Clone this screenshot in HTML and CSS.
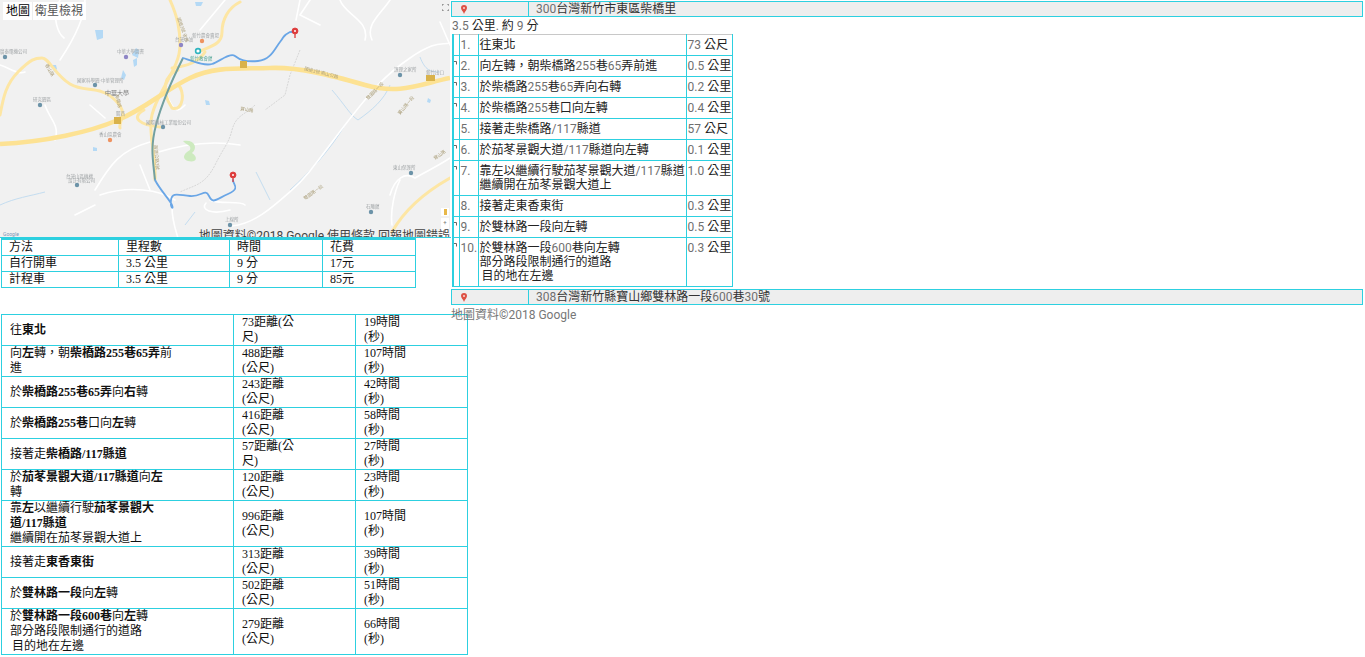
FILE: index.html
```html
<!DOCTYPE html>
<html lang="zh-Hant">
<head>
<meta charset="utf-8">
<title>路線</title>
<link rel="stylesheet" href="styles.css">
</head>
<body>
<div class="page">
  <div class="left">
    <div class="map">
      <svg class="map-art" width="450" height="238" viewBox="0 0 450 238">
        <rect width="450" height="238" fill="#f1f1f1"/>
        <path class="water" d="M95 30l8 0 0 8-6 2zM132 55l4-7 3 2-1 8zM123 70l3 5-2 5-3-2zM133 60l4-2 0 7-3 2zM52 65l4 0 1 4-3 3zM205 100l4 1 1 4-4 0zM93 147l4 1 0 3-4 0zM428 98l3 2-1 3-3-1zM195 2l8 0-2 4-5 0z"/>
        <path class="stream" d="M0 205C15 198 30 196 45 192M256 172L270 200M332 90C345 105 350 115 358 120M358 120C372 110 384 100 390 85M290 190C310 172 330 150 345 125M185 225L195 212M420 57C425 70 430 72 440 72"/>
        <g class="white">
          <path d="M232 226C255 224 275 205 292 190S318 160 345 125 385 75 410 58 440 45 450 43"/>
          <path d="M210 200C220 205 240 200 245 205M172 207C172 220 175 228 178 238M206 203C200 210 212 215 230 210"/>
          <path d="M0 65C10 68 18 75 25 72M85 0C85 20 70 45 60 60M60 0C50 20 60 35 64 38M175 200C160 190 130 185 100 195M150 142C120 150 110 165 95 190M225 0L200 30M300 0L296 20M310 0L300 15 320 25M340 0C345 15 370 20 365 40M390 0C380 15 365 25 372 40M155 153C180 145 210 140 240 145M390 195C395 178 405 172 415 178 425 172 440 165 450 158M392 225C390 210 395 190 400 180"/>
          <path d="M90 105L105 118M45 105C50 120 60 125 55 140M165 90C175 118 180 110 185 105M440 22L450 45M75 215L95 205M140 165L150 190"/>
        </g>
        <path class="trail" d="M255 105C245 115 236 115 232 130S225 145 215 165 195 185 180 192M300 50L290 75 285 95 265 110"/>
        <path class="green" d="M183 141C195 139 198 148 192 153 199 158 196 163 188 161 180 158 186 152 190 150 192 145 186 145 183 141Z"/>
        <g class="yroad">
          <path d="M170 0C178 18 180 30 180 45S172 72 160 95 150 125 153 150 155 175 155 180"/>
          <path d="M240 2C228 8 222 20 222 32S212 46 198 52"/>
          <path d="M0 115C3 100 5 85 18 72S35 58 42 58 55 75 70 84 100 85 115 100 118 120 120 128"/>
          <path d="M392 232C402 214 420 195 450 178"/>
          <path d="M144 110C130 118 140 125 160 127M178 70C165 75 160 90 172 108 184 112 185 90 178 85"/>
          <path d="M172 68C190 66 200 60 205 52"/>
        </g>
        <path class="ymain" d="M0 144C45 142 90 132 118 120S165 90 190 78 240 69 270 68 330 75 365 85 420 84 450 78"/>
        <path class="rt-teal" d="M183 58C172 80 162 102 156 125S153 160 155 180"/>
        <path class="rt" d="M155 180C160 190 170 200 172 205S170 208 171 200 178 195 190 196 205 188 209 196 215 200 228 194 233 185 233 180"/>
        <path class="rt" d="M183 58C195 62 205 66 212 64S230 52 235 56 245 62 258 61 275 48 280 42 282 36 290 32L295 32"/>
        <g class="poi">
          <circle cx="5" cy="57" r="2.2" fill="#6c93a8"/><circle cx="181" cy="45" r="2.2" fill="#8e86c5"/>
          <circle cx="126" cy="57" r="2.2" fill="#8e86c5"/><circle cx="95" cy="85" r="2.2" fill="#6c93a8"/>
          <circle cx="40" cy="105" r="2.2" fill="#6c93a8"/><circle cx="163" cy="127" r="2.2" fill="#6c93a8"/>
          <circle cx="77" cy="185" r="2.2" fill="#6c93a8"/><circle cx="230" cy="225" r="2.2" fill="#6c93a8"/>
          <circle cx="411" cy="173" r="2.2" fill="#6c93a8"/><circle cx="371" cy="212" r="2.2" fill="#6c93a8"/>
          <circle cx="400" cy="75" r="2.2" fill="#6c93a8"/><circle cx="202" cy="41" r="2.2" fill="#ee9361"/>
          <circle cx="110" cy="140" r="2.2" fill="#ee9361"/>
          <rect x="114" y="117" width="7" height="7" fill="#d9b24a"/><rect x="240" y="61" width="7" height="7" fill="#d9b24a"/><rect x="426" y="75" width="9" height="6" fill="#d9b24a"/>
        </g>
        <g class="lbl">
          <text x="0" y="53">廣泰電機公司</text><text x="117" y="53">中華大學圖書</text><text x="175" y="41">台灣中油</text><text x="192" y="37">新竹農會賣場</text>
          <text x="77" y="82">國家科學園-中華管理所</text><text x="33" y="101">研究園區</text><text x="146" y="124">國際機械工業股份公司</text><text x="99" y="136">香山區農會</text>
          <text x="66" y="178">台灣山區機構</text><text x="68" y="182">設計有限公司</text><text x="393" y="169">東山保護所</text><text x="366" y="208">石雕館</text><text x="394" y="71">護理之家所</text><text x="225" y="221">上線所</text>
          <text x="426" y="74">新竹出口</text><text x="116" y="115">關西</text>
          <text class="strong" x="105" y="95">中華大學</text><text class="green-t" x="190" y="60">新竹教會館</text>
          <text class="rot" transform="translate(177 18) rotate(70)">國道3號 省道</text>
          <text class="rot" transform="translate(304 70) rotate(14)">國道3號 南山公路</text>
          <text class="rot" transform="translate(154 145) rotate(85)">高速公路3號</text>
          <text class="rot" transform="translate(115 95) rotate(75)">柴橋路</text>
          <text class="rot" transform="translate(45 65) rotate(60)">香山路</text>
          <text class="rot" transform="translate(305 200) rotate(-35)">雙園路一段</text>
          <text class="rot" transform="translate(368 100) rotate(-45)">雙園路一段</text>
          <text class="rot" transform="translate(435 160) rotate(-35)">寶山路</text>
          <text class="rot" transform="translate(400 115) rotate(-50)">寶山路一段</text>
          <text class="rot" transform="translate(240 110) rotate(10)">寶山路</text>
        </g>
        <g><path class="rpin" d="M295 28a3 3 0 1 0 0 6l0 4 0-4a3 3 0 1 0 0-6z"/><circle cx="295" cy="31" r="1" fill="#fff"/>
        <path class="rpin" d="M233 172a3 3 0 1 0 0 6l0 4 0-4a3 3 0 1 0 0-6z"/><circle cx="233" cy="175" r="1" fill="#fff"/>
        <circle cx="198" cy="51" r="2.4" fill="#fff" stroke="#2fb4bf" stroke-width="1.6"/></g>
      </svg>
      <div class="maptype"><span class="mt-on">地圖</span><span class="mt-off">衛星檢視</span></div>
      <svg class="fs" width="7" height="7" viewBox="0 0 7 7"><path d="M0 2V0H2M5 0H7V2M7 5V7H5M2 7H0V5" fill="none" stroke="#777"/></svg>
      <div class="glogo">Google</div>
      <div class="pegman"></div>
      <div class="zoombox"><span>+</span><span>-</span></div>
      <div class="attr">地圖資料©2018 Google 使用條款 回報地圖錯誤</div>
    </div>

    <table class="t1">
      <colgroup><col class="t1a"><col class="t1b"><col class="t1c"><col class="t1d"></colgroup>
      <tr><td>方法</td><td>里程數</td><td>時間</td><td>花費</td></tr>
      <tr><td>自行開車</td><td>3.5 公里</td><td>9 分</td><td>17元</td></tr>
      <tr><td>計程車</td><td>3.5 公里</td><td>9 分</td><td>85元</td></tr>
    </table>

    <table class="t2">
      <colgroup><col class="t2a"><col class="t2b"><col class="t2c"></colgroup>
      <tr><td class="c1">往<b>東北</b></td><td class="c2">73距離(公尺)</td><td class="c3">19時間(秒)</td></tr>
      <tr><td class="c1">向<b>左</b>轉，朝<b>柴橋路255巷65弄</b>前進</td><td class="c2">488距離(公尺)</td><td class="c3">107時間(秒)</td></tr>
      <tr><td class="c1">於<b>柴橋路255巷65弄</b>向<b>右</b>轉</td><td class="c2">243距離(公尺)</td><td class="c3">42時間(秒)</td></tr>
      <tr><td class="c1">於<b>柴橋路255巷</b>口向<b>左</b>轉</td><td class="c2">416距離(公尺)</td><td class="c3">58時間(秒)</td></tr>
      <tr><td class="c1">接著走<b>柴橋路/117縣道</b></td><td class="c2">57距離(公尺)</td><td class="c3">27時間(秒)</td></tr>
      <tr><td class="c1">於<b>茄苳景觀大道/117縣道</b>向<b>左</b>轉</td><td class="c2">120距離(公尺)</td><td class="c3">23時間(秒)</td></tr>
      <tr><td class="c1">靠<b>左</b>以繼續行駛<b>茄苳景觀大道/117縣道</b><div>繼續開在茄苳景觀大道上</div></td><td class="c2">996距離(公尺)</td><td class="c3">107時間(秒)</td></tr>
      <tr><td class="c1">接著走<b>東香東街</b></td><td class="c2">313距離(公尺)</td><td class="c3">39時間(秒)</td></tr>
      <tr><td class="c1">於<b>雙林路一段</b>向<b>左</b>轉</td><td class="c2">502距離(公尺)</td><td class="c3">51時間(秒)</td></tr>
      <tr><td class="c1">於<b>雙林路一段600巷</b>向<b>左</b>轉<div>部分路段限制通行的道路</div><div class="dest">目的地在左邊</div></td><td class="c2">279距離(公尺)</td><td class="c3">66時間(秒)</td></tr>
    </table>
  </div>

  <div class="right">
    <table class="way">
      <tr><td class="way-pin"><svg class="pin" width="6" height="9" viewBox="0 0 6 9"><path d="M3 0a3 3 0 0 0-3 3c0 2 2 3 3 6 1-3 3-4 3-6a3 3 0 0 0-3-3z" fill="#dd5144"/><circle cx="3" cy="3" r="1" fill="#f7d9d6"/></svg></td><td class="way-text"><span class="l">300</span>台灣新竹市東區柴橋里</td></tr>
    </table>
    <div class="summary"><span class="l">3.5</span> 公里<span class="l">.</span> 約 <span class="l">9</span> 分</div>
    <table class="steps">
      <colgroup><col class="s0"><col class="s1"><col class="s2"><col class="s3"></colgroup>
      <tr><td class="ic"></td><td class="n">1.</td><td>往東北</td><td><span class="l">73</span> 公尺</td></tr>
      <tr><td class="ic"><svg class="turn" width="4" height="4" viewBox="0 0 4 4"><path d="M0 .5H2.5V3.5" fill="none" stroke="#666"/></svg></td><td class="n">2.</td><td>向左轉，朝柴橋路<span class="l">255</span>巷<span class="l">65</span>弄前進</td><td><span class="l">0.5</span> 公里</td></tr>
      <tr><td class="ic"><svg class="turn" width="4" height="4" viewBox="0 0 4 4"><path d="M0 .5H2.5V3.5" fill="none" stroke="#666"/></svg></td><td class="n">3.</td><td>於柴橋路<span class="l">255</span>巷<span class="l">65</span>弄向右轉</td><td><span class="l">0.2</span> 公里</td></tr>
      <tr><td class="ic"><svg class="turn" width="4" height="4" viewBox="0 0 4 4"><path d="M0 .5H2.5V3.5" fill="none" stroke="#666"/></svg></td><td class="n">4.</td><td>於柴橋路<span class="l">255</span>巷口向左轉</td><td><span class="l">0.4</span> 公里</td></tr>
      <tr><td class="ic"></td><td class="n">5.</td><td>接著走柴橋路<span class="l">/117</span>縣道</td><td><span class="l">57</span> 公尺</td></tr>
      <tr><td class="ic"><svg class="turn" width="4" height="4" viewBox="0 0 4 4"><path d="M0 .5H2.5V3.5" fill="none" stroke="#666"/></svg></td><td class="n">6.</td><td>於茄苳景觀大道<span class="l">/117</span>縣道向左轉</td><td><span class="l">0.1</span> 公里</td></tr>
      <tr><td class="ic"><svg class="turn" width="4" height="4" viewBox="0 0 4 4"><path d="M0 .5H2.5V3.5" fill="none" stroke="#666"/></svg></td><td class="n">7.</td><td>靠左以繼續行駛茄苳景觀大道<span class="l">/117</span>縣道<div>繼續開在茄苳景觀大道上</div></td><td><span class="l">1.0</span> 公里</td></tr>
      <tr><td class="ic"></td><td class="n">8.</td><td>接著走東香東街</td><td><span class="l">0.3</span> 公里</td></tr>
      <tr><td class="ic"><svg class="turn" width="4" height="4" viewBox="0 0 4 4"><path d="M0 .5H2.5V3.5" fill="none" stroke="#666"/></svg></td><td class="n">9.</td><td>於雙林路一段向左轉</td><td><span class="l">0.5</span> 公里</td></tr>
      <tr><td class="ic"><svg class="turn" width="4" height="4" viewBox="0 0 4 4"><path d="M0 .5H2.5V3.5" fill="none" stroke="#666"/></svg></td><td class="n">10.</td><td>於雙林路一段<span class="l">600</span>巷向左轉<div>部分路段限制通行的道路</div><div class="dest">目的地在左邊</div></td><td><span class="l">0.3</span> 公里</td></tr>
    </table>
    <table class="way way2">
      <tr><td class="way-pin"><svg class="pin" width="6" height="9" viewBox="0 0 6 9"><path d="M3 0a3 3 0 0 0-3 3c0 2 2 3 3 6 1-3 3-4 3-6a3 3 0 0 0-3-3z" fill="#dd5144"/><circle cx="3" cy="3" r="1" fill="#f7d9d6"/></svg></td><td class="way-text"><span class="l">308</span>台灣新竹縣寶山鄉雙林路一段<span class="l">600</span>巷<span class="l">30</span>號</td></tr>
    </table>
    <div class="credit">地圖資料©2018 Google</div>
  </div>
</div>
</body>
</html>
```

FILE: styles.css
```css
html, body { margin: 0; padding: 0; background: #fff; }
body { overflow: hidden; height: 657px; }

.page { display: flex; align-items: flex-start; }
.left { width: 451px; flex: none; font-family: "Liberation Serif", "Noto Sans CJK TC", serif; font-size: 12px; line-height: 15px; color: #111; }
.right { flex: none; width: 914px; font-family: Roboto, "Noto Sans CJK TC", sans-serif; font-size: 12px; line-height: 14px; color: #222; }
.l { color: #6f6f6f; }

/* map */
.map { position: relative; box-sizing: border-box; width: 451px; height: 238px; overflow: hidden; border-bottom: 1px solid #2dd0e0; font-family: Roboto, "Noto Sans CJK TC", sans-serif; }
.map-art { display: block; filter: blur(0.5px); }
.water { fill: #b4d9f5; }
.stream { fill: none; stroke: #c4ddf0; stroke-width: 1; }
.white path { fill: none; stroke: #fff; stroke-width: 1.6; stroke-linecap: round; }
.trail { fill: none; stroke: #cfcfcf; stroke-width: 0.8; stroke-dasharray: 2 1; }
.green { fill: #cdeabf; }
.yroad path { fill: none; stroke: #fde6a4; stroke-width: 3; stroke-linecap: round; }
.ymain { fill: none; stroke: #fde293; stroke-width: 4.6; }
.rt { fill: none; stroke: #6aa6e6; stroke-width: 1.8; stroke-linecap: round; stroke-linejoin: round; }
.rt-teal { fill: none; stroke: #72a0a0; stroke-width: 2; }
.rpin { fill: #dd3b3b; stroke: #dd3b3b; stroke-width: 0.8; }
.lbl text { font-size: 4.5px; fill: #a2a6a8; font-family: "Noto Sans CJK TC", sans-serif; }
.lbl .strong { font-size: 6px; fill: #777; }
.lbl .green-t { fill: #5aa99b; }
.lbl .rot { fill: #aca07c; }

.maptype { position: absolute; left: 3px; top: 2px; height: 18px; display: flex; background: #fff; line-height: 18px; font-size: 12px; }
.mt-on { padding: 0 2px 0 3px; color: #000; border-right: 1px solid #eee; }
.mt-off { padding: 0 3px 0 2px; color: #555; }
.fs { position: absolute; left: 442px; top: 4px; }
.glogo { position: absolute; left: 3px; top: 231px; font-size: 5px; line-height: 6px; color: #7b95b5; }
.pegman { position: absolute; left: 441px; top: 208px; width: 8px; height: 8px; background: #fff; }
.pegman::before { content: ""; display: block; width: 3px; height: 6px; margin: 1px auto 0; background: #e8b84a; }
.zoombox { position: absolute; left: 441px; top: 218px; width: 8px; height: 19px; background: #fff; display: flex; flex-direction: column; align-items: center; font-size: 6px; line-height: 8px; color: #777; }
.attr { position: absolute; right: 1px; top: 229px; line-height: 14px; font-size: 12px; white-space: nowrap; color: #444; }

/* comparison table */
.t1, .t2 { border-collapse: collapse; table-layout: fixed; margin-left: 1px; }
.t1 td, .t2 td { border: 1px solid #2dd0e0; padding: 0 0 0 8px; }
.t1 td { padding-left: 7px; }
.t1 { width: 415px; border-top: 2px solid #2dd0e0; }
.t1a { width: 117px; } .t1b { width: 111px; } .t1c { width: 93px; } .t1d { width: 93px; }

/* step table */
.t2 { width: 466px; margin-top: 26px; }
.t2a { width: 232px; } .t2b { width: 122px; } .t2c { width: 112px; }
.t2 .c1 { padding-right: 60px; }
.t2 .c2 { padding-right: 58px; }
.t2 .c3 { padding-right: 60px; }
.dest { margin-left: 2px; }

/* right column */
.way { border-collapse: collapse; table-layout: fixed; width: 912px; margin-top: 1px; background: #eee; }
.way td { border: 1px solid #2dd0e0; padding: 0; height: 14px; line-height: 14px; }
.way-pin { width: 76px; }
.way-text { padding-left: 7px !important; color: #333; }
.pin { display: block; margin-left: 9px; }
.way2 { margin-top: 2px; }
.summary { height: 17px; line-height: 18px; padding-left: 1px; }
.steps { border-collapse: collapse; table-layout: fixed; width: 280px; margin-left: 1px; border-left: 2px solid #2dd0e0; border-top: 1px solid #c8c8c8; }
.steps td { border: 1px solid #2dd0e0; padding: 3px 0 3px 1px; vertical-align: top; }
.steps tr:first-child td { border-top: 1px solid #c8c8c8; }
.s0 { width: 6px; } .s1 { width: 19px; } .s2 { width: 208px; } .s3 { width: 46px; }
.steps .ic { padding: 0; }
.steps .n { color: #6f6f6f; padding-left: 1px; }
.turn { display: block; margin-top: 5px; }
.credit { margin-top: 3px; line-height: 15px; color: #777; }
```
